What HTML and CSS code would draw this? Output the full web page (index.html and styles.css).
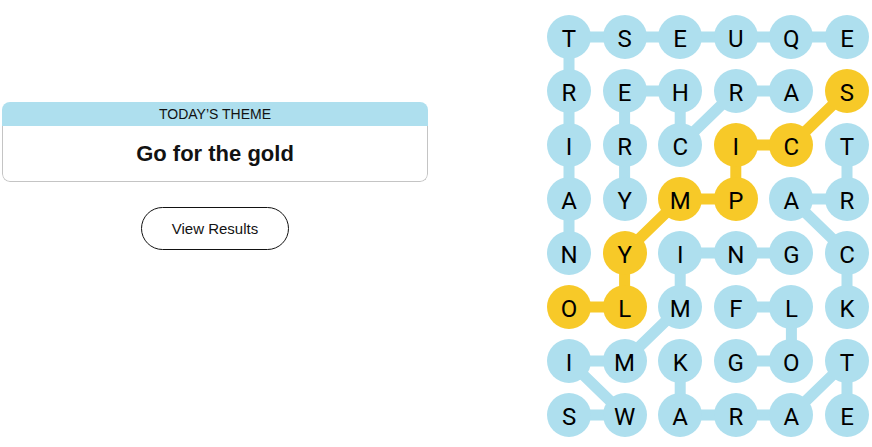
FILE: index.html
```html
<!DOCTYPE html>
<html lang="en">
<head>
    <meta charset="UTF-8">
    <meta name="viewport" content="width=device-width, initial-scale=1.0">
    <title>Strands</title>
    <link rel="stylesheet" href="styles.css">
</head>
<body>
    <div class="page">
        <div class="side">
            <div class="theme-card">
                <div class="theme-head">Today’s Theme</div>
                <div class="theme-body">Go for the gold</div>
            </div>
            <button class="results-btn">View Results</button>
        </div>

        <div class="board">
            <!-- connectors between letters of found words -->
            <svg class="links" width="322" height="422" viewBox="0 0 322 422">
                <g fill="none" stroke="#aedfee" stroke-width="11" stroke-linejoin="round" stroke-linecap="round">
                    <polyline points="300,22 22,22 22,238"/>
                    <polyline points="244.4,76 188.8,76 133.2,130 133.2,76 77.6,76 77.6,130 77.6,184"/>
                    <polyline points="300,130 300,184 244.4,184 300,238 300,292"/>
                    <polyline points="22,400 77.6,400 22,346 77.6,346 133.2,292 133.2,238 188.8,238 244.4,238"/>
                    <polyline points="188.8,346 244.4,346 244.4,292 188.8,292"/>
                    <polyline points="133.2,346 133.2,400 188.8,400 244.4,400 300,346 300,400"/>
                </g>
                <polyline points="22,292 77.6,292 77.6,238 133.2,184 188.8,184 188.8,130 244.4,130 300,76" fill="none" stroke="#f7c928" stroke-width="11" stroke-linejoin="round" stroke-linecap="round"/>
            </svg>

            <div class="cell">T</div><div class="cell">S</div><div class="cell">E</div><div class="cell">U</div><div class="cell">Q</div><div class="cell">E</div>
            <div class="cell">R</div><div class="cell">E</div><div class="cell">H</div><div class="cell">R</div><div class="cell">A</div><div class="cell gold">S</div>
            <div class="cell">I</div><div class="cell">R</div><div class="cell">C</div><div class="cell gold">I</div><div class="cell gold">C</div><div class="cell">T</div>
            <div class="cell">A</div><div class="cell">Y</div><div class="cell gold">M</div><div class="cell gold">P</div><div class="cell">A</div><div class="cell">R</div>
            <div class="cell">N</div><div class="cell gold">Y</div><div class="cell">I</div><div class="cell">N</div><div class="cell">G</div><div class="cell">C</div>
            <div class="cell gold">O</div><div class="cell gold">L</div><div class="cell">M</div><div class="cell">F</div><div class="cell">L</div><div class="cell">K</div>
            <div class="cell">I</div><div class="cell">M</div><div class="cell">K</div><div class="cell">G</div><div class="cell">O</div><div class="cell">T</div>
            <div class="cell">S</div><div class="cell">W</div><div class="cell">A</div><div class="cell">R</div><div class="cell">A</div><div class="cell">E</div>
        </div>
    </div>
</body>
</html>
```

FILE: styles.css
```css
body {
    margin: 0;
    background: #fff;
    color: #121212;
    font-family: "Liberation Sans", Arial, sans-serif;
}
.page {
    display: flex;
    align-items: flex-start;
    padding-left: 2px;
}
.side {
    width: 426px;
    padding-top: 102px;
    display: flex;
    flex-direction: column;
    align-items: center;
    gap: 25px;
}
.theme-card {
    width: 100%;
    border-radius: 8px;
    overflow: hidden;
}
.theme-head {
    background: #aedfee;
    height: 24px;
    line-height: 24px;
    text-align: center;
    font-size: 14px;
    text-transform: uppercase;
}
.theme-body {
    height: 56px;
    line-height: 56px;
    text-align: center;
    font-size: 22px;
    font-weight: bold;
    border: 1px solid #c4c4c4;
    border-top: none;
    border-radius: 0 0 8px 8px;
    box-sizing: border-box;
}
.results-btn {
    width: 148px;
    height: 43px;
    border: 1px solid #121212;
    border-radius: 22px;
    background: #fff;
    color: #121212;
    font-family: "Liberation Sans", Arial, sans-serif;
    font-size: 15px;
}
.board {
    position: relative;
    margin-left: 119px;
    margin-top: 14.5px;
    display: grid;
    grid-template-columns: repeat(6, 44px);
    grid-auto-rows: 44px;
    column-gap: 11.6px;
    row-gap: 10px;
}
.links {
    position: absolute;
    top: 0;
    left: 0;
}
.cell {
    position: relative;
    width: 44px;
    height: 44px;
    box-sizing: border-box;
    padding-top: 5px;
    line-height: 39px;
    border-radius: 50%;
    background: #aedfee;
    text-align: center;
    font-family: Roboto, "Liberation Sans", sans-serif;
    font-size: 24px;
    color: #000;
}
.cell.gold {
    background: #f7c928;
}
```
